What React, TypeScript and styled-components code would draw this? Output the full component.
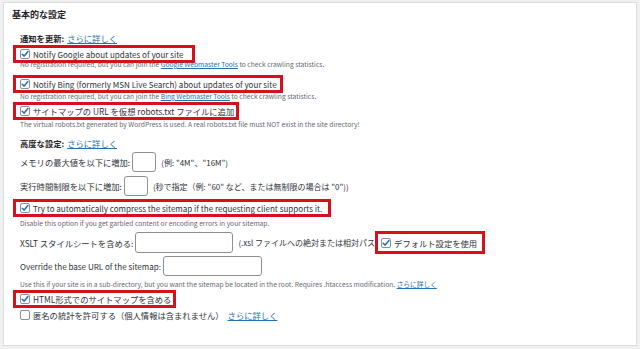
import React from 'react';
import styled, { createGlobalStyle } from 'styled-components';

const GlobalStyle = createGlobalStyle`
  html, body { margin: 0; padding: 0; background: #f0f0f1; }
  body {
    font-family: "Noto Sans CJK JP", "Noto Sans", sans-serif;
    color: #2c3338;
  }
`;

const Page = styled.div`
  width: 640px;
  height: 349px;
  box-sizing: border-box;
  padding: 2px 3px 3px 3px;
`;

const Panel = styled.div`
  height: 100%;
  box-sizing: border-box;
  background: #fff;
  border: 1px solid #dcdcde;
  padding: 6px 16px 0 16px;
  display: flex;
  flex-direction: column;
  align-items: flex-start;
`;

const Title = styled.h2`
  margin: 0 0 0 -8px;
  font-size: 9px;
  line-height: 12px;
  font-weight: 700;
  color: #1d2327;
`;

const SectionLabel = styled.div<{ $mt: number }>`
  margin-top: ${(p) => p.$mt}px;
  font-size: 8.3px;
  line-height: 12px;
  height: 12px;
  white-space: nowrap;
  b { font-weight: 700; color: #1d2327; }
`;

const Link = styled.a<{ $ml?: number }>`
  color: #2271b1;
  text-decoration: underline;
  margin-left: ${(p) => (p.$ml ?? 3)}px;
`;

const CheckRow = styled.label<{ $mt: number; $hl?: number; $latin?: boolean }>`
  margin-top: ${(p) => p.$mt}px;
  display: inline-flex;
  align-items: center;
  gap: 3px;
  height: 12px;
  font-size: ${(p) => (p.$latin ? 8.05 : 8.3)}px;
  white-space: nowrap;
  color: #2c3338;
  ${(p) =>
    p.$hl
      ? `box-sizing: border-box; min-width: ${p.$hl}px; padding: 0 2px 0 4px; margin-left: -4px; box-shadow: 0 0 0 3px #d6101c;`
      : ''}
`;

const Box = styled.span`
  width: 10px;
  height: 10px;
  box-sizing: border-box;
  border: 1px solid #8c8f94;
  border-radius: 2px;
  background: #fff;
  display: inline-flex;
  align-items: center;
  justify-content: center;
  flex: none;
`;

const Desc = styled.div<{ $mt: number }>`
  margin-top: ${(p) => p.$mt}px;
  font-size: 6.7px;
  line-height: 8px;
  height: 8px;
  color: #646970;
  white-space: nowrap;
  a { color: #2271b1; text-decoration: underline; }
`;

const FieldRow = styled.div<{ $mt: number; $h: number; $latin?: boolean }>`
  margin-top: ${(p) => p.$mt}px;
  height: ${(p) => p.$h}px;
  display: flex;
  align-items: center;
  font-size: ${(p) => (p.$latin ? 8.05 : 8.3)}px;
  white-space: nowrap;
  color: #2c3338;
`;

const TextBox = styled.input<{ $w: number; $h: number }>`
  width: ${(p) => p.$w}px;
  height: ${(p) => p.$h}px;
  box-sizing: border-box;
  border: 1px solid #8c8f94;
  border-radius: 3px;
  background: #fff;
  margin: 0 5px 0 2px;
  padding: 0;
  outline: none;
`;

const Hint = styled.span`
  font-size: 8px;
  color: #2c3338;
`;

const InlineHighlight = styled.label`
  display: inline-flex;
  align-items: center;
  gap: 3px;
  height: 17px;
  box-sizing: border-box;
  min-width: 104px;
  margin-left: 3px;
  padding: 0 2px 0 3px;
  box-shadow: 0 0 0 3px #d6101c;
  font-size: 8.3px;
`;

const Check = ({ checked }: { checked: boolean }) => (
  <Box>
    {checked && (
      <svg width="8" height="8" viewBox="0 0 8 8">
        <path d="M1.2 4.2 L3.2 6.1 L6.9 1.6" fill="none" stroke="#2271b1" strokeWidth="1.5" strokeLinecap="round" strokeLinejoin="round" />
      </svg>
    )}
  </Box>
);

export default function App() {
  return (
    <Page>
      <GlobalStyle />
      <Panel>
        <Title>基本的な設定</Title>

        <SectionLabel $mt={11}>
          <b>通知を更新:</b>
          <Link>さらに詳しく</Link>
        </SectionLabel>

        <CheckRow $mt={4} $hl={176} $latin>
          <Check checked />
          Notify Google about updates of your site
        </CheckRow>
        <Desc $mt={0}>
          No registration required, but you can join the <a>Google Webmaster Tools</a> to check crawling statistics.
        </Desc>

        <CheckRow $mt={10} $hl={264} $latin>
          <Check checked />
          Notify Bing (formerly MSN Live Search) about updates of your site
        </CheckRow>
        <Desc $mt={2}>
          No registration required, but you can join the <a>Bing Webmaster Tools</a> to check crawling statistics.
        </Desc>

        <CheckRow $mt={5} $hl={218}>
          <Check checked />
          サイトマップの URL を仮想 robots.txt ファイルに追加
        </CheckRow>
        <Desc $mt={3}>
          The virtual robots.txt generated by WordPress is used. A real robots.txt file must NOT exist in the site directory!
        </Desc>

        <SectionLabel $mt={9}>
          <b>高度な設定:</b>
          <Link>さらに詳しく</Link>
        </SectionLabel>

        <FieldRow $mt={3} $h={20}>
          メモリの最大値を以下に増加:
          <TextBox $w={24} $h={20} readOnly />
          <Hint>(例: "4M"、"16M")</Hint>
        </FieldRow>

        <FieldRow $mt={4} $h={20}>
          実行時間制限を以下に増加:
          <TextBox $w={24} $h={20} readOnly />
          <Hint>(秒で指定（例: "60" など、または無制限の場合は "0"))</Hint>
        </FieldRow>

        <CheckRow $mt={6} $hl={312} $latin>
          <Check checked />
          Try to automatically compress the sitemap if the requesting client supports it.
        </CheckRow>
        <Desc $mt={5}>
          Disable this option if you get garbled content or encoding errors in your sitemap.
        </Desc>

        <FieldRow $mt={5} $h={21}>
          XSLT スタイルシートを含める:
          <TextBox $w={98} $h={21} readOnly />
          <Hint>(.xsl ファイルへの絶対または相対パス</Hint>
          <InlineHighlight>
            <Check checked />
            デフォルト設定を使用
          </InlineHighlight>
        </FieldRow>

        <FieldRow $mt={3} $h={20} $latin>
          Override the base URL of the sitemap:
          <TextBox $w={99} $h={20} readOnly />
        </FieldRow>
        <Desc $mt={4}>
          Use this if your site is in a sub-directory, but you want the sitemap be located in the root. Requires .htaccess modification. <a>さらに詳しく</a>
        </Desc>

        <CheckRow $mt={5} $hl={157}>
          <Check checked />
          HTML形式でのサイトマップを含める
        </CheckRow>

        <CheckRow $mt={4}>
          <Check checked={false} />
          匿名の統計を許可する（個人情報は含まれません）
          <Link $ml={1}>さらに詳しく</Link>
        </CheckRow>
      </Panel>
    </Page>
  );
}
